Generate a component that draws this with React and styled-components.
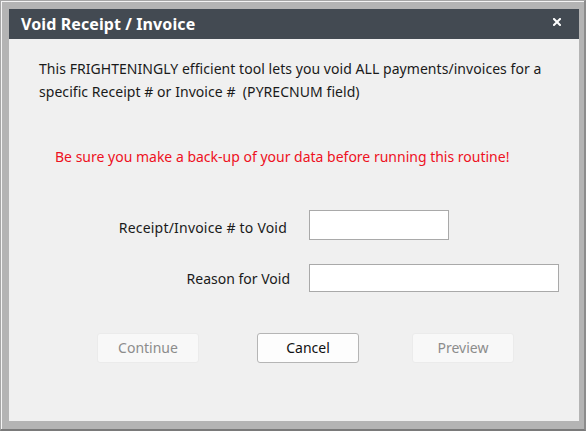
import React from "react";
import styled, { createGlobalStyle } from "styled-components";

const GlobalStyle = createGlobalStyle`
  html, body {
    margin: 0;
    padding: 0;
    background: #b4b4b4;
  }
  * { box-sizing: border-box; }
`;

const Frame = styled.div`
  width: 586px;
  height: 431px;
  background: #b4b4b4;
  border-top: 1px solid #a6a6a6;
  border-left: 1px solid #a6a6a6;
  border-right: 2px solid #8c8c8c;
  border-bottom: 2px solid #7a7a7a;
  box-shadow: inset 1px 1px 0 #f4f4f4;
  padding: 8px 7px 8px 8px;
  display: flex;
`;

const Dialog = styled.div`
  flex: 1;
  display: flex;
  flex-direction: column;
  background: #f0f0f0;
  font-family: "Noto Sans", "Open Sans", sans-serif;
  color: #1a1a1a;
`;

const TitleBar = styled.div`
  height: 30px;
  flex: none;
  background: #434a52;
  display: flex;
  align-items: center;
  justify-content: space-between;
  padding: 0 18px 0 12px;
`;

const Title = styled.h1`
  margin: 0;
  font-size: 16px;
  font-weight: 700;
  color: #ffffff;
  letter-spacing: 0.1px;
`;

const CloseButton = styled.button`
  border: 0;
  background: none;
  padding: 0;
  width: 8px;
  height: 8px;
  display: flex;
  cursor: pointer;
  margin-top: -4px;
`;

const Body = styled.div`
  flex: 1;
  padding: 18px 20px 0 30px;
  display: flex;
  flex-direction: column;
`;

const Intro = styled.p`
  margin: 0;
  font-size: 14px;
  line-height: 23px;
  letter-spacing: 0.05px;
`;

const Warning = styled.p`
  margin: 42px 0 0 16px;
  font-size: 14px;
  line-height: 23px;
  color: #ee1122;
`;

const Form = styled.div`
  margin: 42px 0 0 -30px;
  display: grid;
  grid-template-columns: 278px 1fr;
  column-gap: 22px;
  row-gap: 24px;
  align-items: center;
`;

const Label = styled.label`
  font-size: 14px;
  letter-spacing: ${(p) => p.$track || 0}px;
  text-align: right;
  padding-top: ${(p) => p.$drop || 0}px;
  margin-right: ${(p) => -(p.$nudge || 0)}px;
`;

const Field = styled.input`
  width: ${(p) => p.$w}px;
  height: ${(p) => p.$h}px;
  border: 1px solid #a9a9a9;
  background: #ffffff;
  font: inherit;
  font-size: 14px;
  padding: 0 4px;
  outline: none;
`;

const ButtonRow = styled.div`
  margin: 41px 0 0 58px;
  display: flex;
`;

const Button = styled.button`
  width: 102px;
  height: 30px;
  margin-right: ${(p) => p.$after || 0}px;
  border-radius: 3px;
  font-family: inherit;
  font-size: 14px;
  border: 1px solid ${(p) => (p.disabled ? "#ebebeb" : "#b5b5b5")};
  background: ${(p) => (p.disabled ? "#f8f8f8" : "#fdfdfd")};
  color: ${(p) => (p.disabled ? "#8c8c8c" : "#111111")};
  padding: 0 0 1px;
`;

function CloseIcon() {
  return (
    <svg width="8" height="8" viewBox="0 0 8 8">
      <path d="M1 1 L7 7 M7 1 L1 7" stroke="#ffffff" strokeWidth="2" strokeLinecap="square" />
    </svg>
  );
}

export default function App() {
  return (
    <>
      <GlobalStyle />
      <Frame>
        <Dialog>
          <TitleBar>
            <Title>Void Receipt / Invoice</Title>
            <CloseButton aria-label="Close">
              <CloseIcon />
            </CloseButton>
          </TitleBar>
          <Body>
            <Intro>
              This FRIGHTENINGLY efficient tool lets you void ALL payments/invoices for a
              <br />
              specific Receipt # or Invoice #&nbsp; (PYRECNUM field)
            </Intro>
            <Warning>Be sure you make a back-up of your data before running this routine!</Warning>
            <Form>
              <Label $drop={5} $track={0.2}>Receipt/Invoice # to Void</Label>
              <Field $w={140} $h={30} />
              <Label $nudge={3}>Reason for Void</Label>
              <Field $w={250} $h={28} />
            </Form>
            <ButtonRow>
              <Button disabled $after={58}>Continue</Button>
              <Button $after={53}>Cancel</Button>
              <Button disabled>Preview</Button>
            </ButtonRow>
          </Body>
        </Dialog>
      </Frame>
    </>
  );
}
